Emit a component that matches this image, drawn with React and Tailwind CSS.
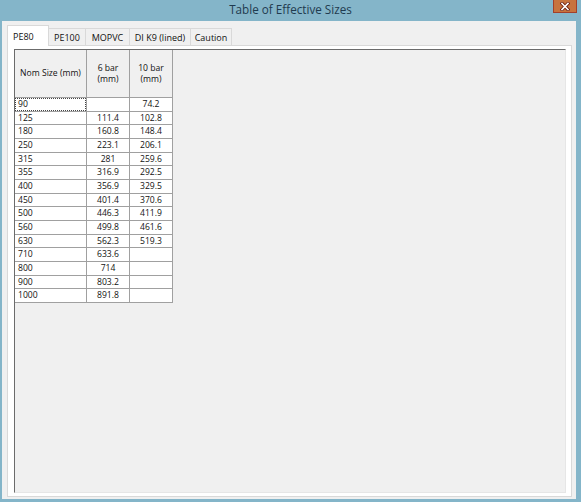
import React from 'react';

const rows = [
  ['90', '', '74.2'],
  ['125', '111.4', '102.8'],
  ['180', '160.8', '148.4'],
  ['250', '223.1', '206.1'],
  ['315', '281', '259.6'],
  ['355', '316.9', '292.5'],
  ['400', '356.9', '329.5'],
  ['450', '401.4', '370.6'],
  ['500', '446.3', '411.9'],
  ['560', '499.8', '461.6'],
  ['630', '562.3', '519.3'],
  ['710', '633.6', ''],
  ['800', '714', ''],
  ['900', '803.2', ''],
  ['1000', '891.8', ''],
];

const tabs = [
  { label: 'PE100', w: 'w-[38px]' },
  { label: 'MOPVC', w: 'w-[45px]' },
  { label: 'DI K9 (lined)', w: 'w-[62px]' },
  { label: 'Caution', w: 'w-[42px]' },
];

const CloseIcon = () => (
  <svg width="10" height="9" viewBox="0 0 10 9">
    <path d="M2 1.5 L8 7.5 M8 1.5 L2 7.5" stroke="#6b1d12" strokeWidth="3.2" strokeLinecap="square" />
    <path d="M2 1.5 L8 7.5 M8 1.5 L2 7.5" stroke="#ffffff" strokeWidth="1.6" strokeLinecap="square" />
  </svg>
);

export default function App() {
  return (
    <div className="w-[581px] h-[502px] bg-[#84b5c9] flex flex-col font-['Open_Sans','Noto_Sans',sans-serif] text-[#111] overflow-hidden">
      {/* title bar */}
      <div className="h-[21px] relative flex items-center justify-center shrink-0">
        <span className="text-[11.7px] leading-none text-[#1f3b4f] -mt-[2px]">Table of Effective Sizes</span>
        <div className="absolute right-[4px] top-0 w-[24px] h-[13px] bg-[#c7733e] border border-[#a3402a] border-t-0 flex items-center justify-center">
          <CloseIcon />
        </div>
      </div>

      {/* client area */}
      <div className="flex-1 ml-[2px] mr-[5px] mb-[3px] bg-[#f0f0f0] pl-[5px] pr-[4px] pt-[4px] pb-[2px] flex flex-col min-h-0">
        {/* tab strip */}
        <div className="h-[20px] flex items-end relative z-10 shrink-0 text-[9px] leading-none">
          <div className="w-[42px] h-[21px] -mb-px bg-white border border-b-0 border-[#d9d9d9] flex items-start pt-[6px] pl-[5px] relative z-10">
            PE80
          </div>
          {tabs.map((t) => (
            <div
              key={t.label}
              className={`${t.w} h-[17px] -ml-px bg-[#f0f0f0] border border-b-0 border-[#d9d9d9] flex items-center justify-center`}
            >
              {t.label}
            </div>
          ))}
        </div>

        {/* tab page */}
        <div className="flex-1 min-h-0 bg-white border border-[#d9d9d9] pl-[6px] pr-[5px] pt-[3px] pb-[3px] flex">
          {/* grid */}
          <div className="flex-1 bg-[#f0f0f0] border-t border-l border-[#6b6b6b] border-r border-b border-r-[#e6e6e6] border-b-[#e6e6e6] text-[8.6px] leading-none">
            <div className="w-[158px]">
              {/* header */}
              <div className="flex h-[48px] border-b border-[#a0a0a0]">
                <div className="w-[72px] border-r border-[#a0a0a0] flex items-center justify-center">
                  Nom Size (mm)
                </div>
                <div className="w-[43px] border-r border-[#a0a0a0] flex flex-col items-center justify-center leading-[11px] text-center">
                  <span>6 bar</span>
                  <span>(mm)</span>
                </div>
                <div className="w-[43px] border-r border-[#a0a0a0] flex flex-col items-center justify-center leading-[11px] text-center">
                  <span>10 bar</span>
                  <span>(mm)</span>
                </div>
              </div>

              {/* rows */}
              {rows.map((r, i) => (
                <div key={r[0]} className="flex h-[13.67px] bg-white border-b border-[#a0a0a0]">
                  <div className="w-[72px] border-r border-[#a0a0a0] flex items-center pl-[3px] relative">
                    {i === 0 && (
                      <span className="absolute left-0 right-0 top-0 bottom-0 border border-dotted border-[#444]" />
                    )}
                    {r[0]}
                  </div>
                  <div className="w-[43px] border-r border-[#a0a0a0] flex items-center justify-center">
                    {r[1]}
                  </div>
                  <div className="w-[43px] border-r border-[#a0a0a0] flex items-center justify-center">
                    {r[2]}
                  </div>
                </div>
              ))}
            </div>
          </div>
        </div>
      </div>
    </div>
  );
}
